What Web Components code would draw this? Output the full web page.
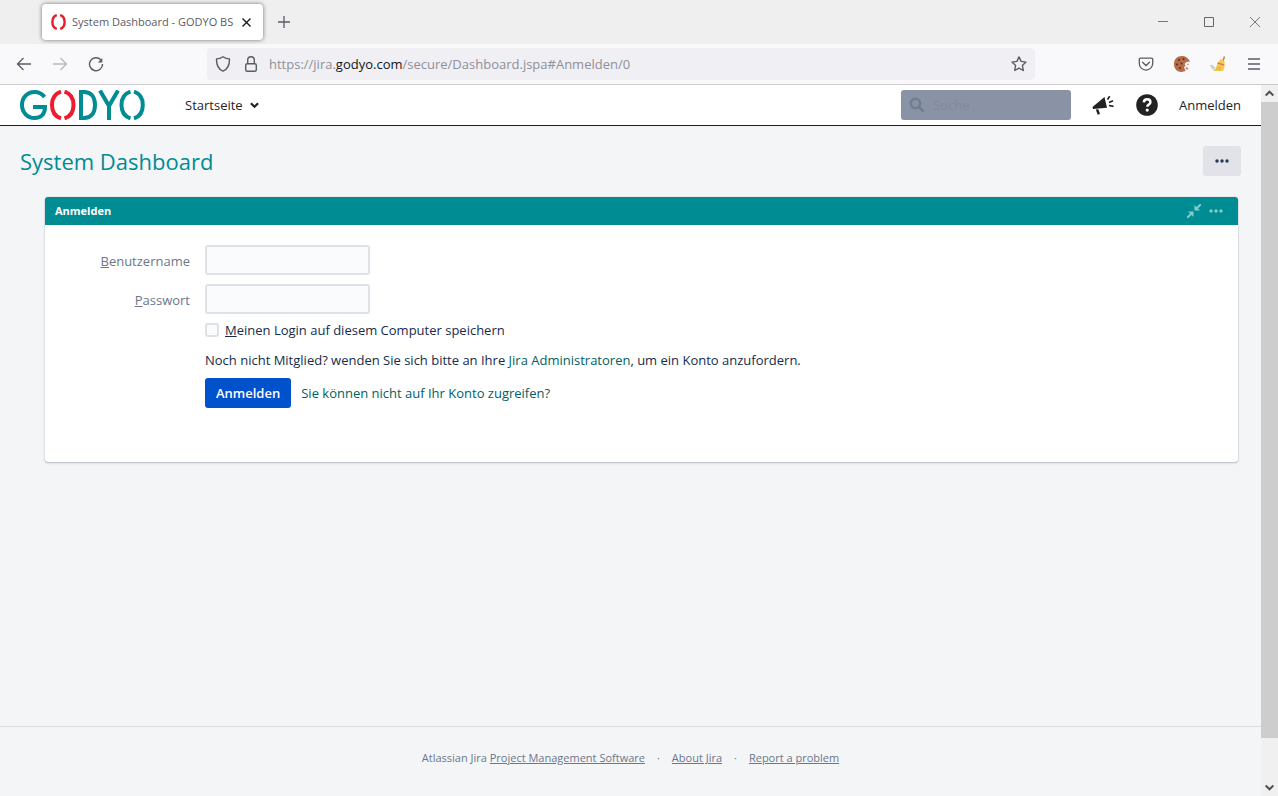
<!DOCTYPE html>
<html lang="de">
<head>
<meta charset="utf-8">
<title>System Dashboard - GODYO BS</title>
<style>
  html, body { height: 100%; margin: 0; }
  body { font: 13px/20px "Open Sans", "Noto Sans", sans-serif; color: #172b4d; background: #f4f5f7; }
</style>
</head>
<body>
<browser-window>
  <tab-strip slot="chrome"></tab-strip>
  <address-bar slot="chrome"></address-bar>
  <jira-header></jira-header>
  <jira-dashboard heading="System Dashboard">
    <jira-gadget heading="Anmelden"><login-form></login-form></jira-gadget>
  </jira-dashboard>
  <jira-footer></jira-footer>
</browser-window>

<script>
const define = (name, html) => {
  const template = document.createElement('template');
  template.innerHTML = '<style>:host,*{box-sizing:border-box}svg{display:block;flex:none}button{font:inherit;color:inherit;border:0;background:none;padding:0;margin:0}a{color:inherit;text-decoration:none}</style>' + html;
  customElements.define(name, class extends HTMLElement {
    constructor() {
      super();
      this.attachShadow({ mode: 'open' }).append(template.content.cloneNode(true));
    }
    connectedCallback() {
      const title = this.shadowRoot.querySelector('[data-heading]');
      if (title) title.textContent = this.getAttribute('heading');
    }
  });
};

define('scroll-rail', `
<style>
  :host { display: flex; flex-direction: column; width: 17px; flex: none; background: #f0f0f0; }
  button { height: 17px; display: grid; place-items: center; flex: none; }
  .track { flex: 1; }
  .thumb { height: 94%; background: #cdcdcd; }
</style>
<button aria-label="Nach oben"><svg width="9" height="7" viewBox="0 0 9 7" fill="none" stroke="#505050" stroke-width="2"><path d="M.7 5.5 4.5 1.7 8.3 5.5"/></svg></button>
<div class="track"><div class="thumb"></div></div>
<button aria-label="Nach unten"><svg width="9" height="7" viewBox="0 0 9 7" fill="none" stroke="#505050" stroke-width="2"><path d="M.7 1.5 4.5 5.3 8.3 1.5"/></svg></button>
`);

define('browser-window', `
<style>
  :host { display: flex; flex-direction: column; min-height: 100vh; }
  .view { flex: 1; display: flex; }
  main { flex: 1; display: flex; flex-direction: column; min-width: 0; }
</style>
<slot name="chrome"></slot>
<div class="view"><main><slot></slot></main><scroll-rail></scroll-rail></div>
`);

define('tab-strip', `
<style>
  :host { display: flex; height: 44px; background: #efefef; padding-left: 42px; align-items: center; font-size: 11px; color: #5b5b66; }
  .tab { width: 221px; height: 36px; display: flex; align-items: center; background: #fff; border-radius: 4px; box-shadow: 0 0 4px #0008; padding: 0 12px 0 9px; }
  .title { flex: 1; margin-left: 6px; white-space: nowrap; }
  .new { margin-left: 14px; }
  .controls { margin-left: auto; display: flex; }
  .controls button { width: 46px; height: 44px; display: grid; place-items: center; }
</style>
<div class="tab">
  <svg width="15" height="16" viewBox="0 0 15 16" fill="none" stroke="#e61e2b" stroke-width="2.400"><path d="M5.800 1.100C2.800 2 1.400 4.600 1.400 8s1.400 6 4.400 6.900M9.200 1.100c3 .9 4.400 3.500 4.400 6.900s-1.400 6-4.400 6.900"/></svg>
  <span class="title">System Dashboard - GODYO BS</span>
  <button aria-label="Tab schließen"><svg width="9" height="9" viewBox="0 0 9 9" stroke="#15141a" stroke-width="1.300"><path d="M.5.5l8 8M8.500.5l-8 8"/></svg></button>
</div>
<button class="new" aria-label="Neuer Tab"><svg width="14" height="14" viewBox="0 0 14 14" stroke="#5b5b66" stroke-width="1.300"><path d="M7 1v12M1 7h12"/></svg></button>
<div class="controls">
  <button aria-label="Minimieren"><svg width="10" height="10" stroke="#777"><path d="M0 4.500h10"/></svg></button>
  <button aria-label="Maximieren"><svg width="10" height="10" fill="none" stroke="#666"><path d="M.5.5h9v9h-9z"/></svg></button>
  <button aria-label="Schließen"><svg width="10" height="10" stroke="#777"><path d="M0 0l10 10M10 0L0 10"/></svg></button>
</div>
`);

define('address-bar', `
<style>
  :host { display: flex; align-items: center; height: 41px; background: #f9f9fb; border-bottom: 1px solid #ccccce; color: #5b5b66; }
  .nav { display: flex; gap: 20px; margin-left: 16px; }
  .off { opacity: .4; }
  .field { flex: 1; height: 32px; display: flex; align-items: center; gap: 12px; background: #f0f0f4; border-radius: 4px; margin: 0 103px; padding: 0 8px; }
  .url { flex: 1; color: #8f8f98; margin-left: -2px; white-space: nowrap; }
  b { font-weight: 400; color: #15141a; }
  .tools { display: flex; gap: 20px; margin-right: 16px; }
</style>
<div class="nav">
  <button aria-label="Zurück"><svg width="16" height="16" fill="none" stroke="#5b5b66" stroke-width="1.300"><path d="M15 8H1.500M7.500 2l-6 6 6 6"/></svg></button>
  <button class="off" aria-label="Vor"><svg width="16" height="16" fill="none" stroke="#5b5b66" stroke-width="1.300"><path d="M1 8h13.500M8.500 2l6 6-6 6"/></svg></button>
  <button aria-label="Neu laden"><svg width="16" height="16" fill="none" stroke="#5b5b66" stroke-width="1.400"><path d="M12.800 3.800A6.500 6.500 0 1 0 14.500 8"/><path d="M14.300 2v4.500H9.800z" fill="#5b5b66" stroke="none"/></svg></button>
</div>
<div class="field">
  <svg width="16" height="16" fill="none" stroke="#5b5b66" stroke-width="1.400"><path d="M8 .8c2 1.400 4.300 2.100 6.500 2.100.1 5.700-1.400 10.300-6.500 12.300C2.900 13.200 1.400 8.600 1.500 2.900 3.700 2.900 6 2.200 8 .8z" stroke-linejoin="round"/></svg>
  <svg width="16" height="16" fill="none" stroke="#5b5b66" stroke-width="1.400"><rect x="2.700" y="7.700" width="10.600" height="7.600" rx="1.500"/><path d="M4.700 7.500V4a3.300 3.300 0 0 1 6.600 0v3.500"/></svg>
  <span class="url">https://jira.<b>godyo.com</b>/secure/Dashboard.jspa#Anmelden/0</span>
  <button aria-label="Lesezeichen"><svg width="16" height="16" fill="none" stroke="#5b5b66" stroke-width="1.400" stroke-linejoin="round"><path d="M8 .9l2.100 4.500 4.900.7-3.600 3.400.9 5L8 12.100l-4.300 2.400.9-5L1 6.100l4.900-.7z"/></svg></button>
</div>
<div class="tools">
  <button aria-label="Pocket"><svg width="16" height="16" fill="none" stroke="#5b5b66" stroke-width="1.300"><path d="M2.500 2.200h11a1.200 1.200 0 0 1 1.200 1.200v4A6.700 6.700 0 0 1 1.300 7.400v-4a1.200 1.200 0 0 1 1.200-1.200z"/><path d="M4.500 6.200 8 9.500l3.500-3.300" stroke-linecap="round"/></svg></button>
  <button aria-label="Cookies"><svg width="16" height="16"><path fill="#b56c48" d="M8 0C3 0 0 3.500 0 8s3 8 7.500 8c2 0 3-.6 4-1.200L10 11.500l1.500-2-1-1.500 2-2 3.500-.5C14.500 2 11.500 0 8 0z"/><g fill="#63301f"><circle cx="5" cy="4" r="1.100"/><circle cx="9.500" cy="3" r="1"/><circle cx="3" cy="8.500" r="1.100"/><circle cx="7.500" cy="7.500" r="1"/><circle cx="6" cy="12" r="1.100"/></g><path fill="#d08b69" d="M11 12l2-1 1.500 1.500-1.500 1.500zM13 8l1.500-.5.500 1.500h-1.500z"/></svg></button>
  <button aria-label="Aufräumen"><svg width="16" height="16"><path d="M14.500.5 12.500 6" stroke="#c48a2d" stroke-width="1.600"/><path fill="#f4cb50" d="M11 3l3.500 2.500c.5 4 0 7-1.500 9.500H3c2-1 3-2.500 3.500-5C7.200 7 9 5 11 3z"/><path d="M7.500 7l6.500 2" stroke="#e8794f" stroke-width="1.800"/><path d="M5 14.500l3.500-3.500M9 14.500l1.500-3.500" stroke="#d9a333"/><path fill="#c6d8cd" d="M0 9.500l2-1 3.500 3-2.500 3z"/></svg></button>
  <button aria-label="Menü"><svg width="16" height="16" stroke="#5b5b66" stroke-width="1.300"><path d="M2 3h12M2 8h12M2 13h12"/></svg></button>
</div>
`);

define('godyo-logo', `
<style>:host { display: block; }</style>
<svg width="126" height="30" viewBox="0 0 126 30" fill="none" stroke="#008c93" stroke-width="4" role="img" aria-label="GODYO">
  <path d="M24.500 7C22 3.700 18.500 2 14.500 2 7.500 2 2 7.500 2 15s5.500 13 12.500 13c6.500 0 10.500-4 10.500-11H13"/>
  <path stroke="#ee1c2e" d="M41 1.700C35 3.500 32 8.500 32 15s3 11.500 9 13.300M44.500 1.700C50.500 3.500 53.500 8.500 53.500 15s-3 11.500-9 13.300"/>
  <path d="M61 2h3c7 0 11 5 11 13s-4 13-11 13h-3zM80 .5l9 15.500 9-15.500M89 15v15"/>
  <path d="M110.500 1.700C104.500 3.500 101.500 8.500 101.500 15s3 11.500 9 13.300M114 1.700C120 3.500 122.800 8.500 122.800 15s-2.800 11.500-8.800 13.300"/>
</svg>
`);

define('jira-header', `
<style>
  :host { display: flex; align-items: center; height: 41px; background: #fff; border-bottom: 1px solid #13212b; padding: 0 20px; color: #1f2328; }
  .menu { display: flex; align-items: center; gap: 7px; margin-left: 39px; }
  .search { margin-left: auto; width: 170px; height: 30px; display: flex; align-items: center; gap: 8px; padding: 0 8px; background: #8993a5; border-radius: 3px; }
  input { font: inherit; width: 100%; min-width: 0; border: 0; padding: 0; background: none; outline: 0; }
  input::placeholder { color: #7f8a9d; opacity: 1; }
  .news { margin: 0 22px 0 21px; }
  .login { margin-left: 21px; }
</style>
<a href="#"><godyo-logo></godyo-logo></a>
<button class="menu">Startseite <svg width="9" height="7" fill="none" stroke="#222" stroke-width="2.200"><path d="M.9 1.200 4.500 4.800 8.100 1.200"/></svg></button>
<label class="search"><svg width="16" height="16" fill="none" stroke="#717d90" stroke-width="2.500"><circle cx="6.500" cy="6.500" r="4.700"/><path d="M10 10l4.500 4.500"/></svg><input aria-label="Suche" placeholder="Suche"></label>
<button class="news" aria-label="Neuigkeiten"><svg width="22" height="20" fill="#222"><path d="M.5 12 12.500 2l2.500 10.700L1 14zM3.800 14.500l2.500-.2 1.700 4.700-2.300.8z"/><path d="M15.500 4.500l2.200-3.300M17 7.500l4-1.800M17 10.500l4.500.8" stroke="#222" stroke-width="1.700"/></svg></button>
<button aria-label="Hilfe"><svg width="22" height="22"><circle cx="11" cy="11" r="10.800" fill="#222"/><path d="M7.800 8.300c.2-2 1.500-3 3.300-3s3.300 1.100 3.300 2.900c0 2.400-3.100 2.400-3.100 4.600" fill="none" stroke="#fff" stroke-width="2.500"/><circle cx="11.200" cy="16.100" r="1.600" fill="#fff"/></svg></button>
<a class="login" href="#">Anmelden</a>
`);

define('jira-dashboard', `
<style>
  :host { display: block; flex: 1; padding: 20px 20px 0; }
  header { display: flex; justify-content: space-between; align-items: center; height: 30px; }
  h1 { margin: 0; font-size: 22px; line-height: 30px; font-weight: 400; color: #008c93; }
  header button { width: 38px; height: 30px; display: grid; place-items: center; background: #e1e3e9; border-radius: 3px; }
  .gadgets { margin: 21px 3px 0 25px; }
</style>
<header><h1 data-heading></h1><button aria-label="Weitere Aktionen"><svg width="14" height="4" fill="#253858"><circle cx="2" cy="2" r="1.700"/><circle cx="7" cy="2" r="1.700"/><circle cx="12" cy="2" r="1.700"/></svg></button></header>
<div class="gadgets"><slot></slot></div>
`);

define('jira-gadget', `
<style>
  :host { display: block; background: #fff; border-radius: 3px; overflow: hidden; box-shadow: 0 1px 2px #091e4240, 0 0 1px #091e4250; }
  header { display: flex; align-items: center; height: 28px; padding: 0 15px 0 10px; gap: 8px; background: #008c93; }
  h2 { flex: 1; margin: 0; font-size: 11px; line-height: 20px; font-weight: 700; color: #fff; }
</style>
<header><h2 data-heading></h2>
<button aria-label="Minimieren"><svg width="14" height="14" stroke="#8ac8cb" stroke-width="2" fill="#8ac8cb"><path d="M14 0 9.500 4.500M0 14l4.500-4.500"/><path stroke="none" d="M7.500 1v5.500H13zM1 7.500h5.500V13z"/></svg></button>
<button aria-label="Optionen"><svg width="14" height="4" fill="#8ac8cb"><circle cx="2" cy="2" r="1.700"/><circle cx="7" cy="2" r="1.700"/><circle cx="12" cy="2" r="1.700"/></svg></button>
</header>
<slot></slot>
`);

define('login-form', `
<style>
  :host { display: block; padding: 20px 20px 54px 0; }
  form { display: grid; grid-template-columns: 145px 1fr; column-gap: 15px; }
  .name { text-align: right; color: #6b778c; line-height: 20px; padding-top: 6px; }
  .text { font: inherit; display: block; width: 165px; height: 30px; border: 2px solid #dfe1e6; border-radius: 3px; background: #fafbfc; padding: 0 4px; margin-bottom: 9px; }
  .rest { grid-column: 2; }
  .remember { display: flex; align-items: center; gap: 6px; height: 14px; }
  .remember input { appearance: none; width: 14px; height: 14px; margin: 0; border: 2px solid #dfe1e6; border-radius: 3px; background: #fafbfc; }
  p { margin: 13px 0 8px; }
  a { color: #005f62; }
  .actions { display: flex; align-items: center; gap: 10px; }
  .actions button { height: 30px; padding: 0 11px; border-radius: 3px; background: #0052cc; color: #fff; font-weight: 600; }
</style>
<form>
  <label class="name" for="user"><u>B</u>enutzername</label><div><input class="text" id="user"></div>
  <label class="name" for="pass"><u>P</u>asswort</label><div><input class="text" id="pass" type="password"></div>
  <div class="rest">
    <div class="remember"><input type="checkbox" id="keep"><label for="keep"><u>M</u>einen Login auf diesem Computer speichern</label></div>
    <p>Noch nicht Mitglied? wenden Sie sich bitte an Ihre <a href="#">Jira Administratoren</a>, um ein Konto anzufordern.</p>
    <div class="actions"><button type="button">Anmelden</button><a href="#">Sie können nicht auf Ihr Konto zugreifen?</a></div>
  </div>
</form>
`);

define('jira-footer', `
<style>
  :host { display: flex; justify-content: center; height: 70px; padding-top: 21px; border-top: 1px solid #d9dbdf; font-size: 11px; color: #6b778c; }
  a { text-decoration: underline; }
  span { margin: 0 12px; }
</style>
<div>Atlassian Jira <a href="#">Project Management Software</a><span>·</span><a href="#">About Jira</a><span>·</span><a href="#">Report a problem</a></div>
`);
</script>
</body>
</html>
